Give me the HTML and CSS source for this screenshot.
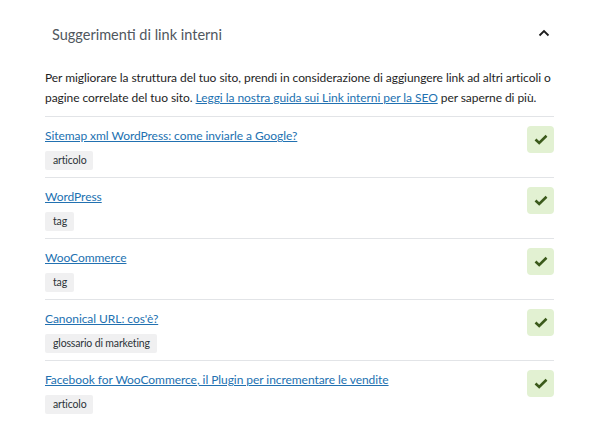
FILE: index.html
```html
<!DOCTYPE html>
<html lang="it">
<head>
  <meta charset="UTF-8" />
  <title>Suggerimenti di link interni</title>
  <link rel="stylesheet" href="styles.css">
</head>
<body>
  <div class="panel">
    <div class="panel-header">
      <h2>Suggerimenti di link interni</h2>
      <svg class="chevron" width="12" height="8" viewBox="0 0 12 8"><path d="M1.5 6.5 L6 2 L10.5 6.5" fill="none" stroke="#1e1e1e" stroke-width="1.8"/></svg>
    </div>

    <div class="panel-body">
      <p class="intro">Per migliorare la struttura del tuo sito, prendi in considerazione di aggiungere link ad altri articoli o pagine correlate del tuo sito. <a href="#">Leggi la nostra guida sui Link interni per la SEO</a> per saperne di più.</p>

      <ul class="links">
        <li>
          <div class="link-info">
            <a href="#">Sitemap xml WordPress: come inviarle a Google?</a>
            <span class="tag">articolo</span>
          </div>
          <span class="check"><svg width="14" height="11" viewBox="0 0 14 11"><path d="M1.5 5.5 L5.2 9 L12.5 1.8" fill="none" stroke="#3b5a1b" stroke-width="2.6"/></svg></span>
        </li>
        <li>
          <div class="link-info">
            <a href="#">WordPress</a>
            <span class="tag">tag</span>
          </div>
          <span class="check"><svg width="14" height="11" viewBox="0 0 14 11"><path d="M1.5 5.5 L5.2 9 L12.5 1.8" fill="none" stroke="#3b5a1b" stroke-width="2.6"/></svg></span>
        </li>
        <li>
          <div class="link-info">
            <a href="#">WooCommerce</a>
            <span class="tag">tag</span>
          </div>
          <span class="check"><svg width="14" height="11" viewBox="0 0 14 11"><path d="M1.5 5.5 L5.2 9 L12.5 1.8" fill="none" stroke="#3b5a1b" stroke-width="2.6"/></svg></span>
        </li>
        <li>
          <div class="link-info">
            <a href="#">Canonical URL: cos'è?</a>
            <span class="tag">glossario di marketing</span>
          </div>
          <span class="check"><svg width="14" height="11" viewBox="0 0 14 11"><path d="M1.5 5.5 L5.2 9 L12.5 1.8" fill="none" stroke="#3b5a1b" stroke-width="2.6"/></svg></span>
        </li>
        <li>
          <div class="link-info">
            <a href="#">Facebook for WooCommerce, il Plugin per incrementare le vendite</a>
            <span class="tag">articolo</span>
          </div>
          <span class="check"><svg width="14" height="11" viewBox="0 0 14 11"><path d="M1.5 5.5 L5.2 9 L12.5 1.8" fill="none" stroke="#3b5a1b" stroke-width="2.6"/></svg></span>
        </li>
      </ul>
    </div>
  </div>
</body>
</html>
```

FILE: styles.css
```css
* {
  box-sizing: border-box;
  margin: 0;
  padding: 0;
}
body {
  font-family: 'Lato', 'Open Sans', sans-serif;
  background: #ffffff;
  color: #1e1e1e;
  font-size: 12px;
  letter-spacing: -0.06px;
}
.panel {
  width: 600px;
  padding: 0 46px 0 45px;
}
.panel-header {
  display: flex;
  align-items: center;
  justify-content: space-between;
  height: 68px;
  padding: 0 4px 0 7px;
}
.panel-header h2 {
  font-size: 14.5px;
  font-weight: 400;
  color: #50575e;
  letter-spacing: 0;
}
.chevron {
  display: block;
  margin-bottom: 2px;
}
.intro {
  line-height: 20px;
  margin-bottom: 8px;
}
a {
  color: #2271b1;
  text-decoration: underline;
}
.links {
  list-style: none;
}
.links li {
  display: flex;
  justify-content: space-between;
  align-items: flex-start;
  border-top: 1px solid #e2e4e7;
  padding: 9px 0 7px;
}
.link-info {
  display: flex;
  flex-direction: column;
  align-items: flex-start;
  gap: 5px;
}
.link-info a {
  line-height: 20px;
}
.tag {
  background: #f0f0f1;
  color: #2c3338;
  font-size: 10.5px;
  letter-spacing: -0.15px;
  line-height: 19px;
  padding: 0 7px 0 8px;
  border-radius: 2px;
}
.check {
  width: 27px;
  height: 27px;
  border-radius: 4px;
  background: #e2f1d2;
  display: flex;
  align-items: center;
  justify-content: center;
}
.check svg {
  display: block;
}
```
